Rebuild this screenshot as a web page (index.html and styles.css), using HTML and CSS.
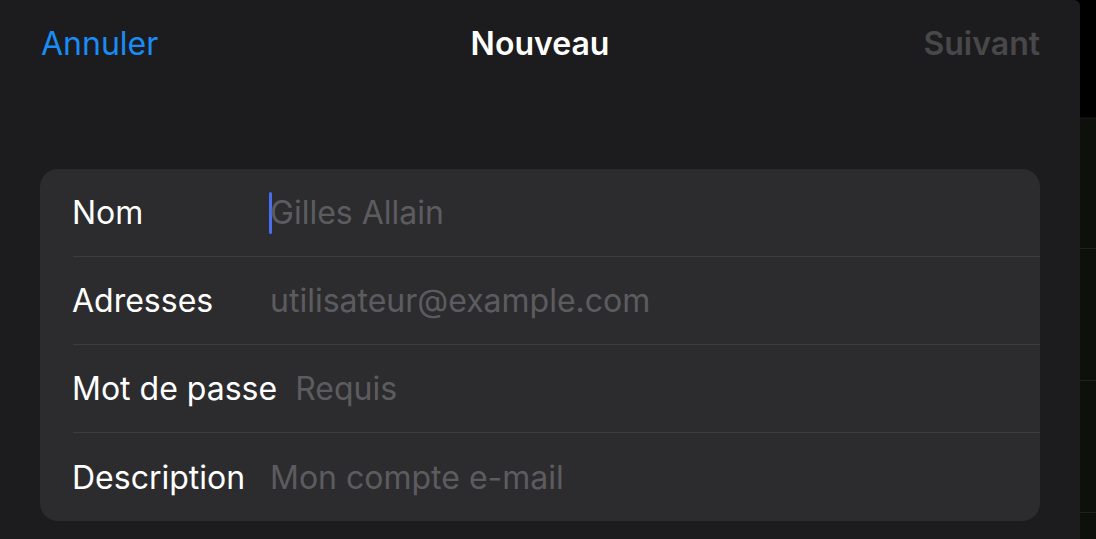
FILE: index.html
```html
<!DOCTYPE html>
<html lang="fr">
<head>
    <meta charset="UTF-8">
    <meta name="viewport" content="width=device-width, initial-scale=1.0">
    <title>Nouveau compte</title>
    <link rel="stylesheet" href="styles.css">
</head>
<body>
    <div class="sheet">
        <header class="nav-bar">
            <a href="#" class="nav-cancel">Annuler</a>
            <h1 class="nav-title">Nouveau</h1>
            <span class="nav-next">Suivant</span>
        </header>

        <form class="form-card">
            <div class="form-row">
                <label class="row-label">Nom</label>
                <div class="row-value">
                    <span class="caret"></span>
                    <span class="placeholder">Gilles Allain</span>
                </div>
            </div>
            <div class="form-row">
                <label class="row-label">Adresses</label>
                <div class="row-value"><span class="placeholder">utilisateur@example.com</span></div>
            </div>
            <div class="form-row">
                <label class="row-label">Mot de passe</label>
                <div class="row-value"><span class="placeholder">Requis</span></div>
            </div>
            <div class="form-row">
                <label class="row-label">Description</label>
                <div class="row-value"><span class="placeholder">Mon compte e-mail</span></div>
            </div>
        </form>
    </div>

    <div class="side-strip">
        <div class="strip-top"></div>
        <div class="strip-cell"></div>
        <div class="strip-cell"></div>
        <div class="strip-cell"></div>
        <div class="strip-rest"></div>
    </div>
</body>
</html>
```

FILE: styles.css
```css
html {
    overflow: hidden;
}
body {
    margin: 0;
    padding: 0;
    background-color: #000;
    font-family: Inter, "Noto Sans", sans-serif;
    display: flex;
    height: 539px;
    overflow: hidden;
}
.sheet {
    width: 1080px;
    flex-shrink: 0;
    background-color: #1c1c1e;
    border-top-right-radius: 6px;
    box-sizing: border-box;
    padding: 0 40px;
}
.nav-bar {
    display: flex;
    align-items: center;
    justify-content: space-between;
    height: 86px;
    position: relative;
}
.nav-cancel {
    color: #1a8cf5;
    text-decoration: none;
    font-size: 32px;
    padding-left: 1px;
}
.nav-title {
    margin: 0;
    color: #fff;
    font-size: 32px;
    font-weight: 600;
    position: absolute;
    left: 50%;
    transform: translateX(-50%);
}
.nav-next {
    color: #48484b;
    font-size: 32px;
    font-weight: 600;
}
.form-card {
    margin-top: 83px;
    background-color: #2c2c2e;
    border-radius: 18px;
    padding-left: 33px;
}
.form-row {
    display: flex;
    align-items: center;
    height: 88px;
    border-bottom: 1px solid #3d3d40;
    box-sizing: border-box;
}
.form-row:last-child {
    border-bottom: none;
}
.row-label {
    color: #fff;
    font-size: 32px;
    min-width: 180px;
    margin-left: -1px;
    margin-right: 18px;
    white-space: nowrap;
}
.row-value {
    display: flex;
    align-items: center;
    font-size: 32px;
}
.placeholder {
    color: #5c5c60;
}
.caret {
    width: 3px;
    height: 42px;
    background-color: #4a6cf0;
    border-radius: 2px;
    margin-left: -1px;
    margin-right: -2px;
}
.side-strip {
    width: 16px;
    flex-shrink: 0;
    display: flex;
    flex-direction: column;
    background-color: #0e100c;
}
.strip-top {
    height: 117px;
    background-color: #000;
}
.strip-cell {
    height: 131px;
    border-bottom: 1px solid #1f221d;
}
.strip-rest {
    flex: 1;
}
```
